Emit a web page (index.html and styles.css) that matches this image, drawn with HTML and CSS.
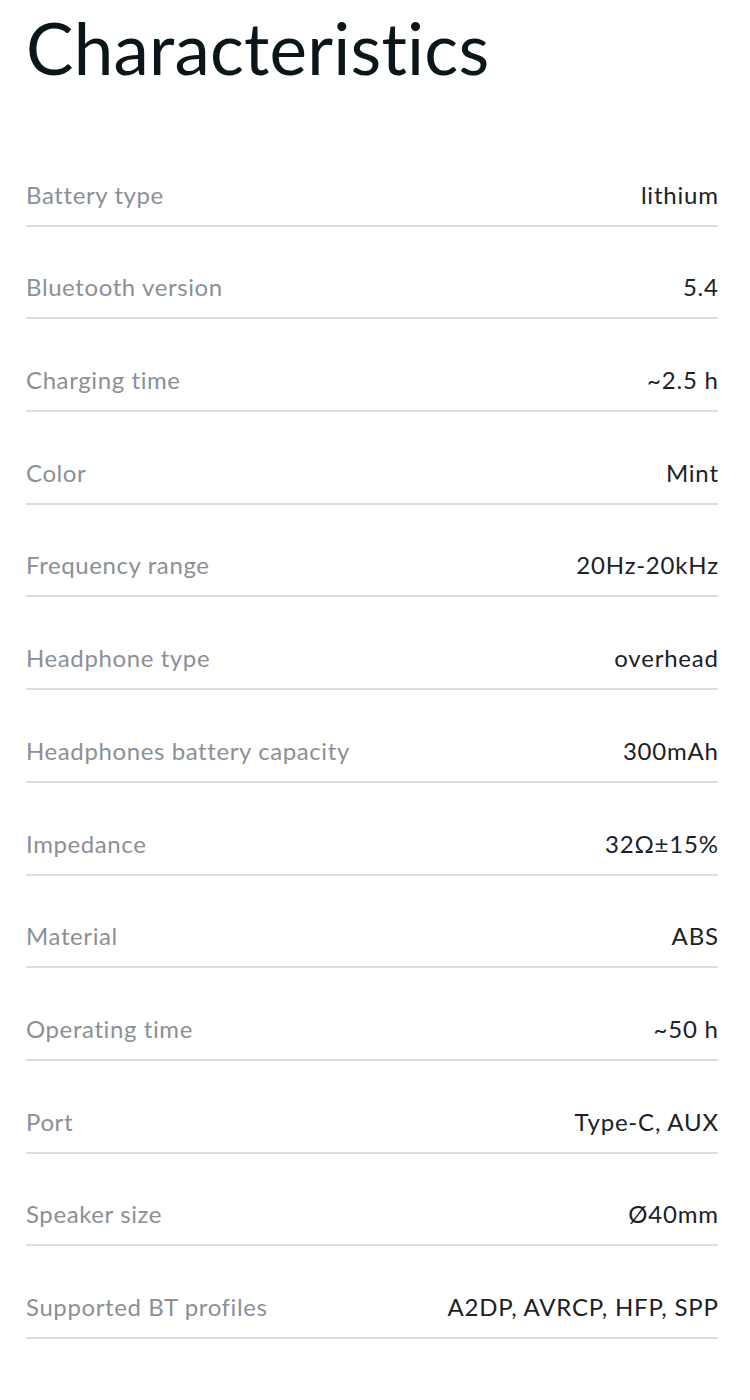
FILE: index.html
```html
<!DOCTYPE html>
<html lang="en">
<head>
<meta charset="utf-8">
<title>Characteristics</title>
<link rel="stylesheet" href="styles.css">
</head>
<body>
<section class="specs">
  <h1 class="specs__title">Characteristics</h1>
  <dl class="specs__list">
    <div class="specs__row"><dt>Battery type</dt><dd>lithium</dd></div>
    <div class="specs__row"><dt>Bluetooth version</dt><dd>5.4</dd></div>
    <div class="specs__row"><dt>Charging time</dt><dd>~2.5 h</dd></div>
    <div class="specs__row"><dt>Color</dt><dd>Mint</dd></div>
    <div class="specs__row"><dt>Frequency range</dt><dd>20Hz-20kHz</dd></div>
    <div class="specs__row"><dt>Headphone type</dt><dd>overhead</dd></div>
    <div class="specs__row"><dt>Headphones battery capacity</dt><dd>300mAh</dd></div>
    <div class="specs__row"><dt>Impedance</dt><dd>32Ω±15%</dd></div>
    <div class="specs__row"><dt>Material</dt><dd>ABS</dd></div>
    <div class="specs__row"><dt>Operating time</dt><dd>~50 h</dd></div>
    <div class="specs__row"><dt>Port</dt><dd>Type-C, AUX</dd></div>
    <div class="specs__row"><dt>Speaker size</dt><dd>Ø40mm</dd></div>
    <div class="specs__row"><dt>Supported BT profiles</dt><dd>A2DP, AVRCP, HFP, SPP</dd></div>
  </dl>
</section>
</body>
</html>
```
FILE: styles.css
```css
* { box-sizing: border-box; }
html, body { margin: 0; padding: 0; background: #ffffff; }
body {
  font-family: Lato, "Open Sans", "Noto Sans", sans-serif;
  color: #14191d;
  font-variant-ligatures: none;
  font-feature-settings: "liga" 0, "dlig" 0;
}
.specs {
  padding: 0 32px 0 26px;
}
.specs__title {
  margin: 0;
  height: 134px;
  padding-top: 10px;
  font-size: 71px;
  line-height: 76px;
  font-weight: 400;
  color: #0b161a;
  letter-spacing: 0.2px;
}
.specs__list {
  margin: 0;
  display: flex;
  flex-direction: column;
}
.specs__row {
  height: 92.7px;
  display: flex;
  justify-content: space-between;
  align-items: flex-end;
  padding-bottom: 16px;
  border-bottom: 2px solid #dcdcdc;
  font-size: 24px;
  line-height: 28px;
  letter-spacing: 0.6px;
}
.specs__row dt {
  color: #8b9096;
}
.specs__row dd {
  margin: 0 -0.8px 0 0;
  color: #1b2126;
  letter-spacing: 0.8px;
}
```
